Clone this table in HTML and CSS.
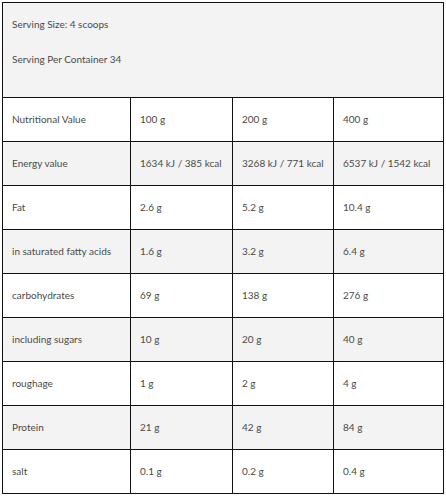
FILE: index.html
```html
<!DOCTYPE html>
<html lang="en">
<head>
<meta charset="utf-8">
<title>Nutrition</title>
<link rel="stylesheet" href="styles.css">
</head>
<body>
<div class="wrap">
<table class="nutri">
  <colgroup>
    <col class="c1"><col class="c2"><col class="c3"><col class="c4">
  </colgroup>
  <tr class="head">
    <td colspan="4">
      <p class="line first">Serving Size: 4 scoops</p>
      <p class="line">Serving Per Container 34</p>
    </td>
  </tr>
  <tr><td>Nutritional Value</td><td>100 g</td><td>200 g</td><td>400 g</td></tr>
  <tr class="alt"><td>Energy value</td><td>1634 kJ / 385 kcal</td><td>3268 kJ / 771 kcal</td><td>6537 kJ / 1542 kcal</td></tr>
  <tr><td>Fat</td><td>2.6 g</td><td>5.2 g</td><td>10.4 g</td></tr>
  <tr class="alt"><td>in saturated fatty acids</td><td>1.6 g</td><td>3.2 g</td><td>6.4 g</td></tr>
  <tr><td>carbohydrates</td><td>69 g</td><td>138 g</td><td>276 g</td></tr>
  <tr class="alt"><td>including sugars</td><td>10 g</td><td>20 g</td><td>40 g</td></tr>
  <tr><td>roughage</td><td>1 g</td><td>2 g</td><td>4 g</td></tr>
  <tr class="alt"><td>Protein</td><td>21 g</td><td>42 g</td><td>84 g</td></tr>
  <tr><td>salt</td><td>0.1 g</td><td>0.2 g</td><td>0.4 g</td></tr>
</table>
</div>
</body>
</html>
```
FILE: styles.css
```css
html, body {
  margin: 0;
  padding: 0;
  background: #fff;
}
.wrap {
  padding: 2px 0 0 2px;
}
.nutri {
  border-collapse: collapse;
  table-layout: fixed;
  width: 441px;
  font-family: Lato, "Open Sans", sans-serif;
  font-size: 10px;
  color: #4a4a4a;
}
.c1 { width: 128px; }
.c2 { width: 102px; }
.c3 { width: 101px; }
.c4 { width: 110px; }
.nutri td {
  border: 1px solid #111;
  height: 41px;
  padding: 0 0 2px 9px;
  vertical-align: middle;
  white-space: nowrap;
  line-height: 14px;
}
.nutri tr.alt td {
  background: #f3f3f3;
}
.nutri tr.head td {
  background: #f3f3f3;
  height: auto;
  padding: 14px 9px 31px 9px;
  vertical-align: top;
}
.line {
  margin: 0;
  line-height: 14px;
}
.line.first {
  margin-bottom: 21px;
}
```
